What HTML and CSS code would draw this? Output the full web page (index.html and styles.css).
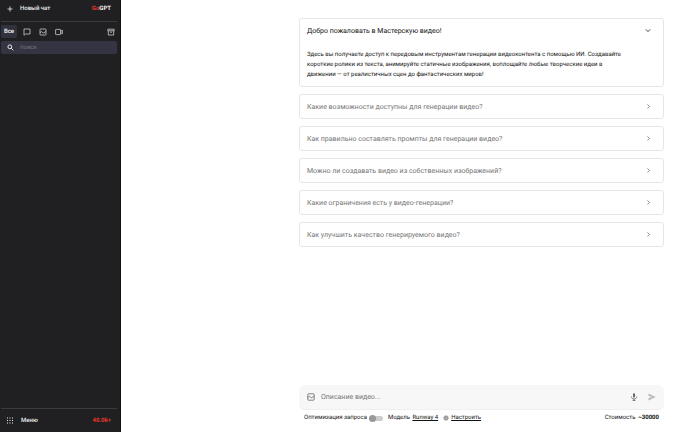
FILE: index.html
```
<!DOCTYPE html>
<html lang="ru">
<head>
  <meta charset="UTF-8">
  <title>GoGPT - Мастерская видео</title>
  <link rel="stylesheet" href="styles.css">
</head>
<body>
  <aside class="sidebar">
    <div class="sidebar-top">
      <button class="new-chat" type="button">
        <svg width="6" height="6" viewBox="0 0 6 6"><path d="M3 0.5v5M0.5 3h5"/></svg>
        Новый чат
      </button>
      <a class="logo" href="#"><span>Go</span>GPT</a>
    </div>

    <nav class="tabs">
      <button class="tab active" type="button">Все</button>
      <button class="tab" type="button" aria-label="Чаты">
        <svg width="8" height="8" viewBox="0 0 8 8"><path d="M1 1h6v5H2.5L1 7.3z"/></svg>
      </button>
      <button class="tab" type="button" aria-label="Изображения">
        <svg width="8" height="8" viewBox="0 0 8 8"><rect x="1" y="1" width="6" height="6" rx="0.5"/><path d="M1 4.6l1.6-1 1.6 1.4L7 3.6"/></svg>
      </button>
      <button class="tab" type="button" aria-label="Видео">
        <svg width="8" height="8" viewBox="0 0 8 8"><rect x="0.6" y="1.4" width="5" height="5.2" rx="0.6"/><path d="M5.6 3.4l1.8-1.2v3.6L5.6 4.6"/></svg>
      </button>
      <button class="tab archive" type="button" aria-label="Архив">
        <svg width="8" height="8" viewBox="0 0 8 8"><path d="M0.8 1.2h6.4v1.6H0.8zM1.3 2.8v4.2h5.4V2.8M3 4.2h2"/></svg>
      </button>
    </nav>

    <label class="search">
      <svg width="7" height="7" viewBox="0 0 7 7"><circle cx="2.8" cy="2.8" r="1.9"/><path d="M4.3 4.3l2 2"/></svg>
      <input type="text" placeholder="поиск" aria-label="Поиск">
    </label>

    <div class="sidebar-bottom">
      <button class="menu" type="button">
        <svg width="7" height="7" viewBox="0 0 7 7"><path d="M0 1h6.5M0 3.5h6.5M0 6h6.5"/></svg>
        Меню
      </button>
      <span class="balance">40.0k+</span>
    </div>
  </aside>

  <main class="main">
    <section class="faq">
      <details class="card" open>
        <summary>Добро пожаловать в Мастерскую видео!
          <svg width="6" height="6" viewBox="0 0 6 6"><path d="M0.8 1.4L3 3.6l2.2-2.2"/></svg>
        </summary>
        <p>Здесь вы получаете доступ к передовым инструментам генерации видеоконтента с помощью ИИ. Создавайте короткие ролики из текста, анимируйте статичные изображения, воплощайте любые творческие идеи в движении — от реалистичных сцен до фантастических миров!</p>
      </details>
      <details class="card">
        <summary>Какие возможности доступны для генерации видео?
          <svg width="6" height="6" viewBox="0 0 6 6"><path d="M2.4 0.4L4.4 2.4 2.4 4.4"/></svg>
        </summary>
      </details>
      <details class="card">
        <summary>Как правильно составлять промпты для генерации видео?
          <svg width="6" height="6" viewBox="0 0 6 6"><path d="M2.4 0.4L4.4 2.4 2.4 4.4"/></svg>
        </summary>
      </details>
      <details class="card">
        <summary>Можно ли создавать видео из собственных изображений?
          <svg width="6" height="6" viewBox="0 0 6 6"><path d="M2.4 0.4L4.4 2.4 2.4 4.4"/></svg>
        </summary>
      </details>
      <details class="card">
        <summary>Какие ограничения есть у видео-генерации?
          <svg width="6" height="6" viewBox="0 0 6 6"><path d="M2.4 0.4L4.4 2.4 2.4 4.4"/></svg>
        </summary>
      </details>
      <details class="card">
        <summary>Как улучшить качество генерируемого видео?
          <svg width="6" height="6" viewBox="0 0 6 6"><path d="M2.4 0.4L4.4 2.4 2.4 4.4"/></svg>
        </summary>
      </details>
    </section>

    <form class="composer">
      <div class="prompt">
        <button type="button" aria-label="Добавить изображение">
          <svg width="8" height="8" viewBox="0 0 8 8"><rect x="0.8" y="0.8" width="6.4" height="6.4" rx="0.8"/><path d="M0.8 4.4l1.8-1 1.6 1.4 3-1.4"/></svg>
        </button>
        <input type="text" placeholder="Описание видео..." aria-label="Описание видео">
        <button type="button" aria-label="Голосовой ввод">
          <svg width="8" height="8" viewBox="0 0 8 8"><rect class="fill" x="3" y="0.2" width="2" height="4.4" rx="1"/><path d="M1.4 3.6c0 3.2 5.2 3.2 5.2 0M4 5.8v1.8M2.6 7.5h2.8"/></svg>
        </button>
        <button class="send" type="submit" aria-label="Отправить">
          <svg width="8" height="8" viewBox="0 0 8 8"><path class="fill" d="M0.5 0.4L7.8 4 0.5 7.6V4.9L4 4 0.5 3.1z"/></svg>
        </button>
      </div>
      <div class="options">
        <label class="optimize">Оптимизация запроса <input type="checkbox"></label>
        <span class="model">Модель <a href="#">Runway 4</a></span>
        <a class="settings" href="#">
          <svg width="6" height="6" viewBox="0 0 6 6"><circle cx="3" cy="3" r="1.5"/><circle class="teeth" cx="3" cy="3" r="2.5"/></svg><span>Настроить</span>
        </a>
        <span class="cost">Стоимость <b>~30000</b></span>
      </div>
    </form>
  </main>
</body>
</html>
```

FILE: styles.css
```
* {
  box-sizing: border-box;
}

body {
  margin: 0;
  display: flex;
  min-height: 100vh;
  background: #fff;
  color: #111;
  font-family: Roboto, "Liberation Sans", sans-serif;
  font-size: 7px;
  line-height: 10px;
  text-rendering: geometricPrecision;
}

button,
input {
  font: inherit;
  color: inherit;
  text-rendering: inherit;
  background: none;
  border: none;
  padding: 0;
  margin: 0;
}

button {
  cursor: pointer;
}

a {
  color: inherit;
}

svg {
  display: block;
  flex: none;
  fill: none;
  stroke: currentColor;
  stroke-width: 0.8;
}

svg .fill {
  fill: currentColor;
  stroke: none;
}

/* sidebar */
.sidebar {
  display: flex;
  flex-direction: column;
  flex: none;
  width: 121px;
  padding: 0 3px 0 1px;
  background: #202022;
  border-right: 1px solid #111;
  color: #eee;
  font-size: 6px;
}

.sidebar-top,
.sidebar-bottom {
  display: flex;
  align-items: center;
  justify-content: space-between;
  padding: 0 6px;
}

.sidebar-top {
  height: 22px;
  padding-bottom: 3px;
  border-bottom: 1px solid #3b3b3d;
}

.sidebar-bottom {
  height: 24px;
  margin-top: auto;
  border-top: 1px solid #3b3b3d;
}

.new-chat,
.menu {
  display: flex;
  align-items: center;
  gap: 7px;
  font-weight: 500;
}

.menu svg {
  stroke-width: 1;
  stroke-dasharray: 1 1.5;
}

.logo {
  font-weight: 700;
  text-decoration: none;
}

.logo span,
.balance {
  color: #e8392a;
}

.balance {
  font-weight: 700;
}

.tabs {
  display: flex;
  align-items: center;
  margin-top: 3px;
}

.tab {
  display: flex;
  align-items: center;
  justify-content: center;
  width: 16px;
  height: 13px;
  border-radius: 2px;
  color: #ccc;
}

.tab.active {
  margin-right: 2px;
  background: #32323f;
  color: #fff;
  font-weight: 500;
}

.tab.archive {
  margin-left: auto;
  width: 13px;
}

.search {
  display: flex;
  align-items: center;
  gap: 6px;
  height: 13px;
  margin-top: 3px;
  padding: 0 6px;
  border-radius: 2px;
  background: #353442;
}

.search svg {
  stroke-width: 1;
}

.search input {
  flex: 1;
  min-width: 0;
}

.search input::placeholder {
  color: #77767f;
}

/* content */
.main {
  display: flex;
  flex-direction: column;
  justify-content: space-between;
  flex: 1;
  min-width: 0;
  padding: 18px 36px 9px 178px;
}

.faq {
  display: flex;
  flex-direction: column;
  gap: 7px;
}

.card {
  border: 1px solid #e6e6e6;
  border-radius: 3px;
  color: #757575;
}

.card[open] {
  color: #111;
}

.card summary {
  display: flex;
  align-items: center;
  justify-content: space-between;
  height: 23px;
  padding: 0 12px 0 7px;
  list-style: none;
  cursor: pointer;
}

.card p {
  margin: 0;
  padding: 8px 39px 6px 7px;
  font-size: 6px;
}

.prompt {
  display: flex;
  align-items: center;
  gap: 6px;
  height: 25px;
  padding: 0 8px;
  border-radius: 6px;
  background: #f7f7f7;
  border-bottom: 1px solid #efefef;
  color: #666;
}

.prompt input {
  flex: 1;
  min-width: 0;
}

.prompt input::placeholder {
  color: #757575;
}

.prompt .send {
  margin-left: 4px;
  color: #bbb;
}

.options {
  display: flex;
  align-items: center;
  gap: 5px;
  height: 10px;
  margin-top: 3px;
  padding: 0 5px;
  font-size: 6px;
}

.optimize,
.settings {
  display: flex;
  align-items: center;
  gap: 2px;
}

.optimize input {
  appearance: none;
  display: flex;
  align-items: center;
  width: 14px;
  height: 5px;
  border-radius: 3px;
  background: #ccc;
}

.optimize input::before {
  content: "";
  width: 7px;
  height: 7px;
  flex: none;
  border-radius: 50%;
  background: #999;
}

.model a {
  margin-left: 1px;
}

.settings {
  text-decoration: none;
}

.settings svg {
  color: #999;
  fill: #ccc;
  stroke-width: 1.6;
}

.settings .teeth {
  fill: none;
  stroke-width: 0.8;
  stroke-dasharray: 1 0.96;
}

.settings span {
  text-decoration: underline;
}

.cost {
  margin-left: auto;
}

.cost b {
  margin-left: 1px;
}
```
